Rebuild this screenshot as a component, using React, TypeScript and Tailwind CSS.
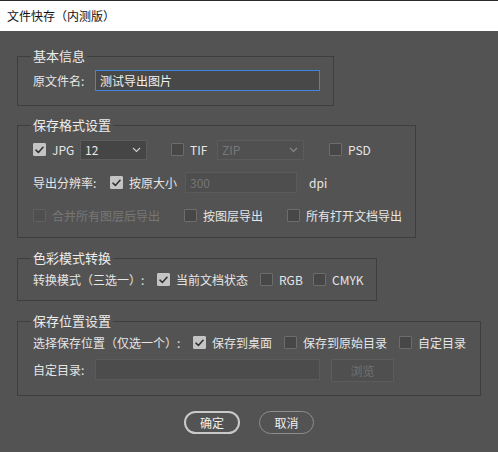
import React from "react";

function Check() {
  return (
    <svg width="9" height="8" viewBox="0 0 9 8" fill="none">
      <path d="M1 4.2 L3.4 6.5 L8 1.3" stroke="#333" strokeWidth="1.6" strokeLinecap="round" strokeLinejoin="round" />
    </svg>
  );
}

function Cb({ checked = false, disabled = false }: { checked?: boolean; disabled?: boolean }) {
  const cls = checked
    ? "bg-[#c4c4c4] border-[#c4c4c4]"
    : disabled
    ? "bg-[#4f4f4f] border-[#5f5f5f]"
    : "bg-[#474747] border-[#6c6c6c]";
  return (
    <span className={`w-[13px] h-[13px] shrink-0 flex items-center justify-center border rounded-[1px] ${cls}`}>
      {checked ? <Check /> : null}
    </span>
  );
}

function Chevron({ color }: { color: string }) {
  return (
    <svg width="9" height="6" viewBox="0 0 9 6" fill="none">
      <path d="M1 1 L4.5 4.5 L8 1" stroke={color} strokeWidth="1.1" />
    </svg>
  );
}

function Opt({
  label,
  checked,
  disabled,
  w,
}: {
  label: string;
  checked?: boolean;
  disabled?: boolean;
  w: string;
}) {
  return (
    <div className={`flex items-center gap-[6px] shrink-0 whitespace-nowrap ${w}`}>
      <Cb checked={checked} disabled={disabled} />
      <span className={disabled ? "text-[#777777]" : "text-[#e6e6e6]"}>{label}</span>
    </div>
  );
}

function Group({ title, w, children, cls }: { title: string; w: string; children: React.ReactNode; cls: string }) {
  return (
    <fieldset className={`min-w-0 self-start border border-[#3e3e3e] pl-[15px] ${w} ${cls}`}>
      <legend className="px-[2px] -ml-[2px] text-[#ececec] text-[13px] leading-[16px]">{title}</legend>
      {children}
    </fieldset>
  );
}

export default function App() {
  return (
    <div className="w-[498px] h-[452px] flex flex-col font-['Noto_Sans_CJK_SC','Noto_Sans',sans-serif] text-[12px] leading-[16px] overflow-hidden whitespace-nowrap">
      <div className="h-[31px] shrink-0 bg-white border-t border-[#2a2a2a] flex items-center pl-[7px] text-[12px] text-[#111]">
        文件快存（内测版）
      </div>
      <div className="flex-1 bg-[#535353] pt-[17px] pl-[17px] flex flex-col">
        <Group title="基本信息" w="w-[317px]" cls="pt-[6px] pb-[14px]">
          <div className="flex items-center h-[21px]">
            <span className="w-[62px] text-[#e6e6e6]">原文件名:</span>
            <div className="w-[225px] h-[21px] bg-[#484848] border border-[#3a86e0] flex items-center pl-[4px] text-[#f0f0f0]">
              测试导出图片
            </div>
          </div>
        </Group>

        <Group title="保存格式设置" w="w-[399px]" cls="mt-[11px] pt-[6px] pb-[11px]">
          <div className="flex flex-col gap-[12px]">
            <div className="flex items-center h-[21px]">
              <Opt label="JPG" checked w="w-[47px]" />
              <div className="w-[67px] h-[20px] bg-[#454545] border border-[#5c5c5c] flex items-center justify-between pl-[4px] pr-[5px] text-[#eaeaea]">
                <span>12</span>
                <Chevron color="#cfcfcf" />
              </div>
              <div className="ml-[24px]">
                <Opt label="TIF" w="w-[46px]" />
              </div>
              <div className="w-[87px] h-[20px] bg-[#505050] border border-[#5c5c5c] flex items-center justify-between pl-[4px] pr-[5px] text-[#777]">
                <span>ZIP</span>
                <Chevron color="#8a8a8a" />
              </div>
              <div className="ml-[25px]">
                <Opt label="PSD" w="w-[50px]" />
              </div>
            </div>
            <div className="flex items-center h-[21px]">
              <span className="w-[77px] text-[#e6e6e6]">导出分辨率:</span>
              <Opt label="按原大小" checked w="w-[75px]" />
              <div className="w-[112px] h-[21px] bg-[#4e4e4e] border border-[#5a5a5a] flex items-center pl-[4px] text-[#757575]">
                300
              </div>
              <span className="ml-[12px] text-[#e6e6e6]">dpi</span>
            </div>
            <div className="flex items-center h-[21px]">
              <Opt label="合并所有图层后导出" disabled w="w-[151px]" />
              <Opt label="按图层导出" w="w-[103px]" />
              <Opt label="所有打开文档导出" w="w-[110px]" />
            </div>
          </div>
        </Group>

        <Group title="色彩模式转换" w="w-[360px]" cls="mt-[12px] pt-[3px] pb-[10px]">
          <div className="flex items-center h-[21px]">
            <span className="w-[124px] text-[#e6e6e6]">转换模式（三选一）:</span>
            <Opt label="当前文档状态" checked w="w-[103px]" />
            <Opt label="RGB" w="w-[53px]" />
            <Opt label="CMYK" w="w-[60px]" />
          </div>
        </Group>

        <Group title="保存位置设置" w="w-[464px]" cls="mt-[12px] pt-[3px] pb-[15px]">
          <div className="flex flex-col gap-[6px]">
            <div className="flex items-center h-[21px]">
              <span className="w-[160px] text-[#e6e6e6]">选择保存位置（仅选一个）:</span>
              <Opt label="保存到桌面" checked w="w-[91px]" />
              <Opt label="保存到原始目录" w="w-[115px]" />
              <Opt label="自定目录" w="w-[60px]" />
            </div>
            <div className="flex items-start h-[21px]">
              <span className="w-[62px] h-[21px] flex items-center text-[#e6e6e6]">自定目录:</span>
              <div className="w-[225px] h-[21px] bg-[#4c4c4c] border border-[#5a5a5a]" />
              <div className="ml-[11px] w-[63px] h-[23px] bg-[#4f4f4f] border border-[#5c5c5c] flex items-center justify-center text-[#727272]">
                浏览
              </div>
            </div>
          </div>
        </Group>

        <div className="mt-[15px] -ml-[17px] flex justify-center gap-[19px]">
          <div className="w-[56px] h-[23px] rounded-full border-2 border-[#c9c9c9] flex items-center justify-center text-[#f0f0f0]">
            确定
          </div>
          <div className="w-[55px] h-[23px] rounded-full border border-[#8e8e8e] flex items-center justify-center text-[#f0f0f0]">
            取消
          </div>
        </div>
      </div>
    </div>
  );
}
